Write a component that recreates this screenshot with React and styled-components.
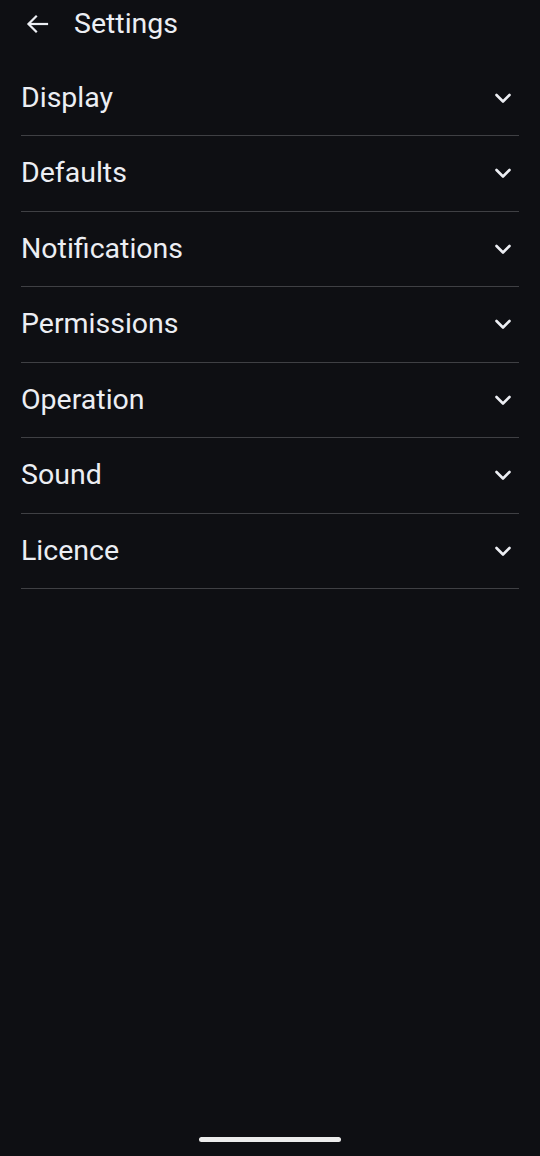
import React from "react";
import styled, { createGlobalStyle } from "styled-components";

const Global = createGlobalStyle`
  html, body { margin: 0; padding: 0; background: #0e0f13; }
  body { font-family: Roboto, "Noto Sans", sans-serif; color: #eceef3; }
`;

const Screen = styled.div`
  width: 540px;
  height: 1156px;
  background: #0e0f13;
  display: flex;
  flex-direction: column;
  position: relative;
  overflow: hidden;
`;

const Header = styled.header`
  height: 48px;
  display: flex;
  align-items: center;
  padding-left: 25px;
  gap: 25px;
`;

const BackButton = styled.button`
  background: none;
  border: none;
  padding: 0;
  width: 24px;
  height: 24px;
  display: flex;
  align-items: center;
  justify-content: center;
  color: #eceef3;
`;

const Title = styled.h1`
  margin: 0;
  font-size: 28.5px;
  font-weight: 400;
  line-height: 1;
`;

const List = styled.ul`
  list-style: none;
  margin: 0;
  padding: 12.5px 21px 0 21px;
`;

const Row = styled.li`
  height: 74.5px;
  border-bottom: 1px solid #3f4044;
  display: flex;
  align-items: center;
  justify-content: space-between;
`;

const Label = styled.span`
  font-size: 28.5px;
  font-weight: 400;
  line-height: 1;
`;

const ChevronBox = styled.span`
  width: 24px;
  height: 24px;
  margin-right: 4px;
  display: flex;
  align-items: center;
  justify-content: center;
`;

const HomeBar = styled.div`
  position: absolute;
  left: 199px;
  top: 1137px;
  width: 142px;
  height: 5px;
  border-radius: 3px;
  background: #ececec;
`;

const Arrow = () => (
  <svg width="24" height="24" viewBox="0 0 24 24" fill="none" stroke="#eceef3" strokeWidth="2.2" strokeLinecap="square">
    <path d="M22 12H4" />
    <path d="M11 4.5L3.5 12 11 19.5" />
  </svg>
);

const Chevron = () => (
  <svg width="18" height="12" viewBox="0 0 18 12" fill="none" stroke="#eceef3" strokeWidth="2.6" strokeLinecap="round" strokeLinejoin="round">
    <path d="M2.5 3l6.5 6.5L15.5 3" />
  </svg>
);

const items = ["Display", "Defaults", "Notifications", "Permissions", "Operation", "Sound", "Licence"];

export default function App() {
  return (
    <Screen>
      <Global />
      <Header>
        <BackButton aria-label="Back"><Arrow /></BackButton>
        <Title>Settings</Title>
      </Header>
      <List>
        {items.map((it) => (
          <Row key={it}>
            <Label>{it}</Label>
            <ChevronBox><Chevron /></ChevronBox>
          </Row>
        ))}
      </List>
      <HomeBar />
    </Screen>
  );
}
